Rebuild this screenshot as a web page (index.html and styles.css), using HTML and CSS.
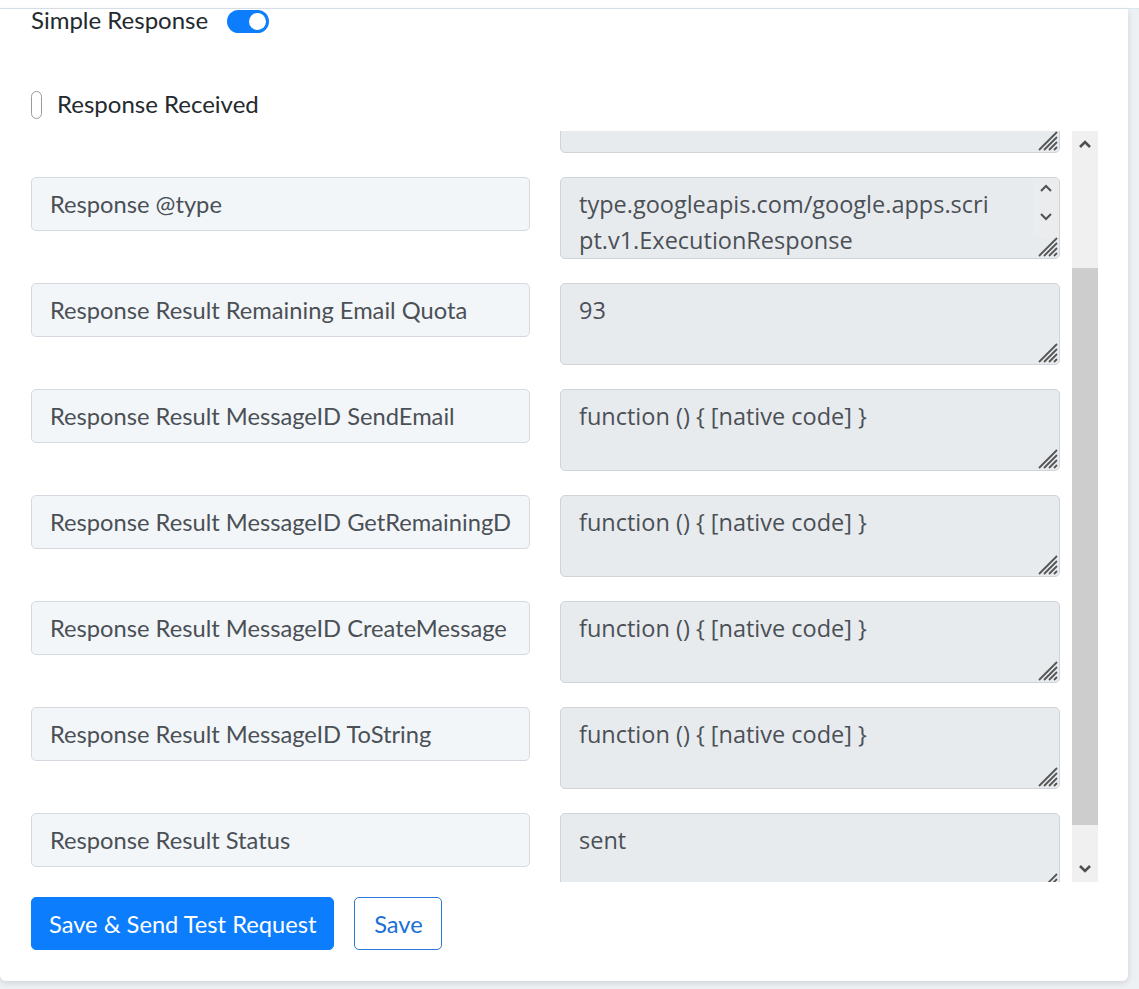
FILE: index.html
```html
<!DOCTYPE html>
<html lang="en">
<head>
<meta charset="utf-8">
<title>Response</title>
<link rel="stylesheet" href="styles.css">
</head>
<body>
<div class="topbar"></div>
<main class="card">
  <div class="toggle-row">
    <span class="label">Simple Response</span>
    <span class="switch"><span class="knob"></span></span>
  </div>
  <div class="check-row">
    <span class="checkbox"></span>
    <span class="label">Response Received</span>
  </div>
  <div class="scroll-box">
    <div class="viewport">
      <div class="grid">
        <div class="field"></div>
        <div class="area"><svg class="grip" viewBox="0 0 22 22"><path d="M21 3L3 21M21 8L8 21M21 13L13 21M21 18L18 21"/></svg></div>

        <div class="field"><span class="field-text">Response @type</span></div>
        <div class="area has-sb">
          <div class="area-text">type.googleapis.com/google.apps.scri<br>pt.v1.ExecutionResponse</div>
          <div class="mini-sb">
            <svg viewBox="0 0 14 9"><path d="M2 7L7 2L12 7"/></svg>
            <svg viewBox="0 0 14 9"><path d="M2 2L7 7L12 2"/></svg>
          </div>
          <svg class="grip" viewBox="0 0 22 22"><path d="M21 3L3 21M21 8L8 21M21 13L13 21M21 18L18 21"/></svg>
        </div>

        <div class="field"><span class="field-text">Response Result Remaining Email Quota</span></div>
        <div class="area">93<svg class="grip" viewBox="0 0 22 22"><path d="M21 3L3 21M21 8L8 21M21 13L13 21M21 18L18 21"/></svg></div>

        <div class="field"><span class="field-text">Response Result MessageID SendEmail</span></div>
        <div class="area">function () { [native code] }<svg class="grip" viewBox="0 0 22 22"><path d="M21 3L3 21M21 8L8 21M21 13L13 21M21 18L18 21"/></svg></div>

        <div class="field"><span class="field-text">Response Result MessageID GetRemainingDailyQuota</span></div>
        <div class="area">function () { [native code] }<svg class="grip" viewBox="0 0 22 22"><path d="M21 3L3 21M21 8L8 21M21 13L13 21M21 18L18 21"/></svg></div>

        <div class="field"><span class="field-text">Response Result MessageID CreateMessage</span></div>
        <div class="area">function () { [native code] }<svg class="grip" viewBox="0 0 22 22"><path d="M21 3L3 21M21 8L8 21M21 13L13 21M21 18L18 21"/></svg></div>

        <div class="field"><span class="field-text">Response Result MessageID ToString</span></div>
        <div class="area">function () { [native code] }<svg class="grip" viewBox="0 0 22 22"><path d="M21 3L3 21M21 8L8 21M21 13L13 21M21 18L18 21"/></svg></div>

        <div class="field"><span class="field-text">Response Result Status</span></div>
        <div class="area">sent<svg class="grip" viewBox="0 0 22 22"><path d="M21 3L3 21M21 8L8 21M21 13L13 21M21 18L18 21"/></svg></div>
      </div>
    </div>
    <div class="scrollbar">
      <div class="sb-btn"><svg viewBox="0 0 14 10"><path d="M2 8L7 3L12 8"/></svg></div>
      <div class="sb-track"><div class="sb-thumb"></div></div>
      <div class="sb-btn"><svg viewBox="0 0 14 10"><path d="M2 2L7 7L12 2"/></svg></div>
    </div>
  </div>
  <div class="actions">
    <button class="btn btn-primary">Save &amp; Send Test Request</button>
    <button class="btn btn-outline">Save</button>
  </div>
</main>
</body>
</html>
```

FILE: styles.css
```css
* { box-sizing: border-box; }

html, body {
  margin: 0;
  padding: 0;
}

body {
  background: #eef1f4;
  font-family: "Lato", "Liberation Sans", sans-serif;
  width: 1139px;
  height: 989px;
  overflow: hidden;
}

.topbar {
  height: 9px;
  background: #ffffff;
  border-bottom: 1px solid #dbe5ec;
}

.card {
  width: 1128px;
  background: #ffffff;
  border-radius: 0 0 6px 6px;
  box-shadow: 0 2px 6px rgba(0, 0, 0, 0.13);
  padding: 0 30px 31px 31px;
}

.label {
  font-size: 24px;
  color: #24292e;
  line-height: 28px;
}

.toggle-row {
  display: flex;
  align-items: center;
  height: 24px;
  gap: 19px;
}

.toggle-row .label {
  margin-top: -3px;
}

.switch {
  width: 42px;
  height: 23px;
  border-radius: 12px;
  background: #0b7dfd;
  display: flex;
  align-items: center;
  justify-content: flex-end;
  padding-right: 3px;
}

.knob {
  width: 17px;
  height: 17px;
  border-radius: 50%;
  background: #ffffff;
}

.check-row {
  display: flex;
  align-items: center;
  height: 28px;
  margin-top: 58px;
  gap: 15px;
}

.check-row .label {
  margin-top: -3px;
}

.checkbox {
  width: 11px;
  height: 28px;
  border: 1px solid #9a9a9a;
  border-radius: 6px;
  background: #ffffff;
}

.scroll-box {
  display: flex;
  margin-top: 12px;
  height: 751px;
}

.viewport {
  width: 1041px;
  height: 751px;
  overflow: hidden;
}

.grid {
  display: grid;
  grid-template-columns: 499px 500px;
  column-gap: 30px;
  row-gap: 24px;
  margin-top: -60px;
  padding-right: 12px;
  align-items: start;
}

.field {
  height: 54px;
  background: #f3f6f9;
  border: 1px solid #d3d9df;
  border-radius: 5px;
  padding: 0 18px;
  display: flex;
  align-items: center;
  font-size: 23.7px;
  color: #4a5056;
}

.field-text {
  display: block;
  white-space: nowrap;
  overflow: hidden;
  min-width: 0;
  flex: 1;
  margin-top: -1px;
}

.area {
  position: relative;
  height: 82px;
  background: #e8ebee;
  border: 1px solid #cfd4d9;
  border-radius: 5px;
  padding: 8px 18px;
  font-family: "Open Sans", "Lato", sans-serif;
  font-size: 23.5px;
  line-height: 36px;
  color: #4a5056;
  white-space: nowrap;
  overflow: hidden;
}

.area.has-sb {
  display: flex;
  padding-right: 0;
}

.area-text {
  flex: 1;
}

.mini-sb {
  width: 26px;
  margin-top: -8px;
  padding-top: 6px;
  display: flex;
  flex-direction: column;
  align-items: center;
  gap: 19px;
  background: #ebecee;
  height: 60px;
}

.mini-sb svg {
  width: 14px;
  height: 9px;
  fill: none;
  stroke: #505050;
  stroke-width: 2;
}

.grip {
  position: absolute;
  right: 1px;
  bottom: 1px;
  width: 22px;
  height: 22px;
  fill: none;
  stroke: #555555;
  stroke-width: 1.8;
}

.scrollbar {
  width: 26px;
  height: 751px;
  background: #f0f0f0;
  display: flex;
  flex-direction: column;
}

.sb-btn {
  height: 26px;
  display: flex;
  align-items: center;
  justify-content: center;
}

.sb-btn svg {
  width: 14px;
  height: 10px;
  fill: none;
  stroke: #505050;
  stroke-width: 2.6;
}

.sb-track {
  flex: 1;
  padding-top: 111px;
}

.sb-thumb {
  height: 557px;
  background: #cdcdcd;
}

.actions {
  display: flex;
  gap: 20px;
  margin-top: 15px;
}

.btn {
  height: 53px;
  font-family: "Lato", "Liberation Sans", sans-serif;
  font-size: 23.7px;
  border-radius: 5px;
  padding: 0 17px;
  cursor: pointer;
}

.btn-primary {
  background: #0b7dfd;
  color: #ffffff;
  border: 1px solid #0b7dfd;
}

.btn-outline {
  background: #ffffff;
  color: #1a6fd6;
  border: 1px solid #2a78d6;
  width: 88px;
}
```
